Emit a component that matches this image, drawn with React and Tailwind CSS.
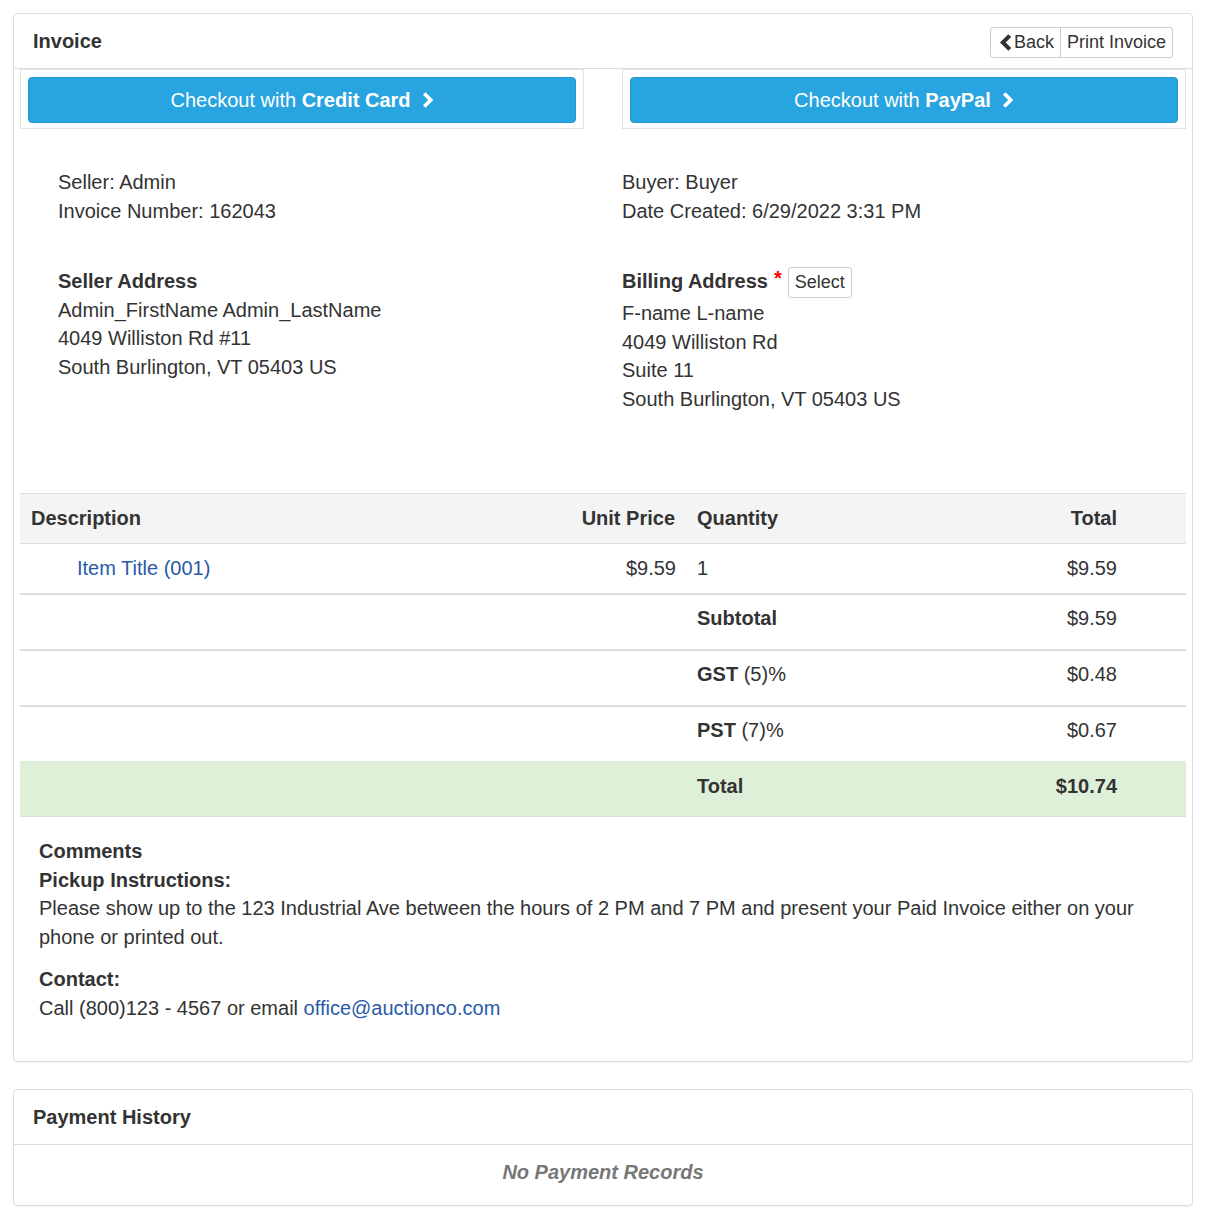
import React from "react";

const ChevronRight = ({ className = "" }) => (
  <svg viewBox="0 0 12 16" className={className} fill="none">
    <path d="M3 2l6 6-6 6" stroke="currentColor" strokeWidth="3.4" strokeLinecap="butt" strokeLinejoin="miter" />
  </svg>
);

const ChevronLeft = ({ className = "" }) => (
  <svg viewBox="0 0 12 16" className={className} fill="none">
    <path d="M10 1.5L3.5 8l6.5 6.5" stroke="currentColor" strokeWidth="3.8" strokeLinecap="butt" strokeLinejoin="miter" />
  </svg>
);

const CheckoutButton = ({ label }) => (
  <div className="border border-[#e3e3e3] px-[7px] pt-[7px] pb-[5px]">
    <button className="w-full h-[46px] rounded-[4px] bg-[#28a4e0] border border-[#2196d0] text-white text-[20px] flex items-center justify-center gap-[10px]">
      <span>
        Checkout with <span className="font-bold">{label}</span>
      </span>
      <ChevronRight className="w-[13px] h-[18px]" />
    </button>
  </div>
);

const summaryRows = [
  { label: "Subtotal", extra: "", value: "$9.59" },
  { label: "GST", extra: " (5)%", value: "$0.48" },
  { label: "PST", extra: " (7)%", value: "$0.67" },
];

const cols = "grid grid-cols-[540px_126px_214px_228px_59px]";

const App = () => {
  return (
    <div
      className="bg-white text-[#333] p-[13px] text-[20px] leading-[28.5px]"
      style={{ fontFamily: '"Liberation Sans", Arial, sans-serif' }}
    >
      <div className="border border-[#ddd] rounded-[4px] shadow-[0_1px_1px_rgba(0,0,0,0.05)]">
        <div className="h-[55px] px-[19px] flex items-center justify-between border-b border-[#ddd]">
          <div className="font-bold text-[20px]">Invoice</div>
          <div className="flex h-[31px] text-[18px] border border-[#ccc] rounded-[3px] mt-[2px]">
            <button className="flex items-center pl-[8px] pr-[6px] gap-[2px] border-r border-[#ccc]">
              <ChevronLeft className="w-[13px] h-[17px]" />
              Back
            </button>
            <button className="px-[6px]">Print Invoice</button>
          </div>
        </div>

        <div className="px-[6px]">
          <div className="grid grid-cols-2 gap-[38px]">
            <CheckoutButton label="Credit Card" />
            <CheckoutButton label="PayPal" />
          </div>

          <div className="grid grid-cols-[564px_1fr] pl-[38px] mt-[39px]">
            <div>
              <div>Seller: Admin</div>
              <div>Invoice Number: 162043</div>
            </div>
            <div>
              <div>Buyer: Buyer</div>
              <div>Date Created: 6/29/2022 3:31 PM</div>
            </div>
          </div>

          <div className="grid grid-cols-[564px_1fr] pl-[38px] mt-[42px]">
            <div>
              <div className="font-bold">Seller Address</div>
              <div>Admin_FirstName Admin_LastName</div>
              <div>4049 Williston Rd #11</div>
              <div>South Burlington, VT 05403 US</div>
            </div>
            <div>
              <div className="flex items-start h-[32px]">
                <span className="font-bold">Billing Address</span>
                <span className="text-[#f00] font-bold ml-[6px] -mt-[3px]">*</span>
                <button className="ml-[6px] h-[31px] px-[6px] text-[18px] border border-[#ccc] rounded-[3px]">
                  Select
                </button>
              </div>
              <div>F-name L-name</div>
              <div>4049 Williston Rd</div>
              <div>Suite 11</div>
              <div>South Burlington, VT 05403 US</div>
            </div>
          </div>

          <div className="mt-[80px]">
            <div className={`${cols} h-[51px] items-center bg-[#f4f4f4] border-t border-b border-[#ddd] font-bold`}>
              <div className="pl-[11px]">Description</div>
              <div className="text-right pr-[11px]">Unit Price</div>
              <div className="pl-[11px]">Quantity</div>
              <div className="text-right pr-[11px]">Total</div>
              <div></div>
            </div>
            <div className={`${cols} h-[51px] items-center border-b-2 border-[#ddd]`}>
              <div className="pl-[57px]">
                <a href="#" className="text-[#2a5aa8]">Item Title (001)</a>
              </div>
              <div className="text-right pr-[10px]">$9.59</div>
              <div className="pl-[11px]">1</div>
              <div className="text-right pr-[11px]">$9.59</div>
              <div></div>
            </div>
            {summaryRows.map((r) => (
              <div key={r.label} className={`${cols} h-[56px] items-start pt-[9px] border-b-2 border-[#ddd]`}>
                <div></div>
                <div></div>
                <div className="pl-[11px]">
                  <span className="font-bold">{r.label}</span>
                  {r.extra}
                </div>
                <div className="text-right pr-[11px]">{r.value}</div>
                <div></div>
              </div>
            ))}
            <div className={`${cols} h-[56px] items-start pt-[11px] bg-[#dff0d8] border-b border-[#ddd] font-bold -mt-[2px]`}>
              <div></div>
              <div></div>
              <div className="pl-[11px]">Total</div>
              <div className="text-right pr-[11px]">$10.74</div>
              <div></div>
            </div>
          </div>

          <div className="px-[19px] pt-[20px] pb-[39px]">
            <div className="font-bold">Comments</div>
            <div className="font-bold">Pickup Instructions:</div>
            <p className="mb-[14px]">
              Please show up to the 123 Industrial Ave between the hours of 2 PM and 7 PM and present your Paid Invoice either on your phone or printed out.
            </p>
            <div className="font-bold">Contact:</div>
            <div>
              Call (800)123 - 4567 or email{" "}
              <a href="#" className="text-[#2a5aa8]">office@auctionco.com</a>
            </div>
          </div>
        </div>
      </div>

      <div className="mt-[27px] border border-[#ddd] rounded-[4px] shadow-[0_1px_1px_rgba(0,0,0,0.05)]">
        <div className="h-[55px] px-[19px] flex items-center border-b border-[#ddd]">
          <div className="font-bold">Payment History</div>
        </div>
        <div className="h-[60px] pb-[6px] flex items-center justify-center italic font-bold text-[#777]">
          No Payment Records
        </div>
      </div>
    </div>
  );
};

export default App;
